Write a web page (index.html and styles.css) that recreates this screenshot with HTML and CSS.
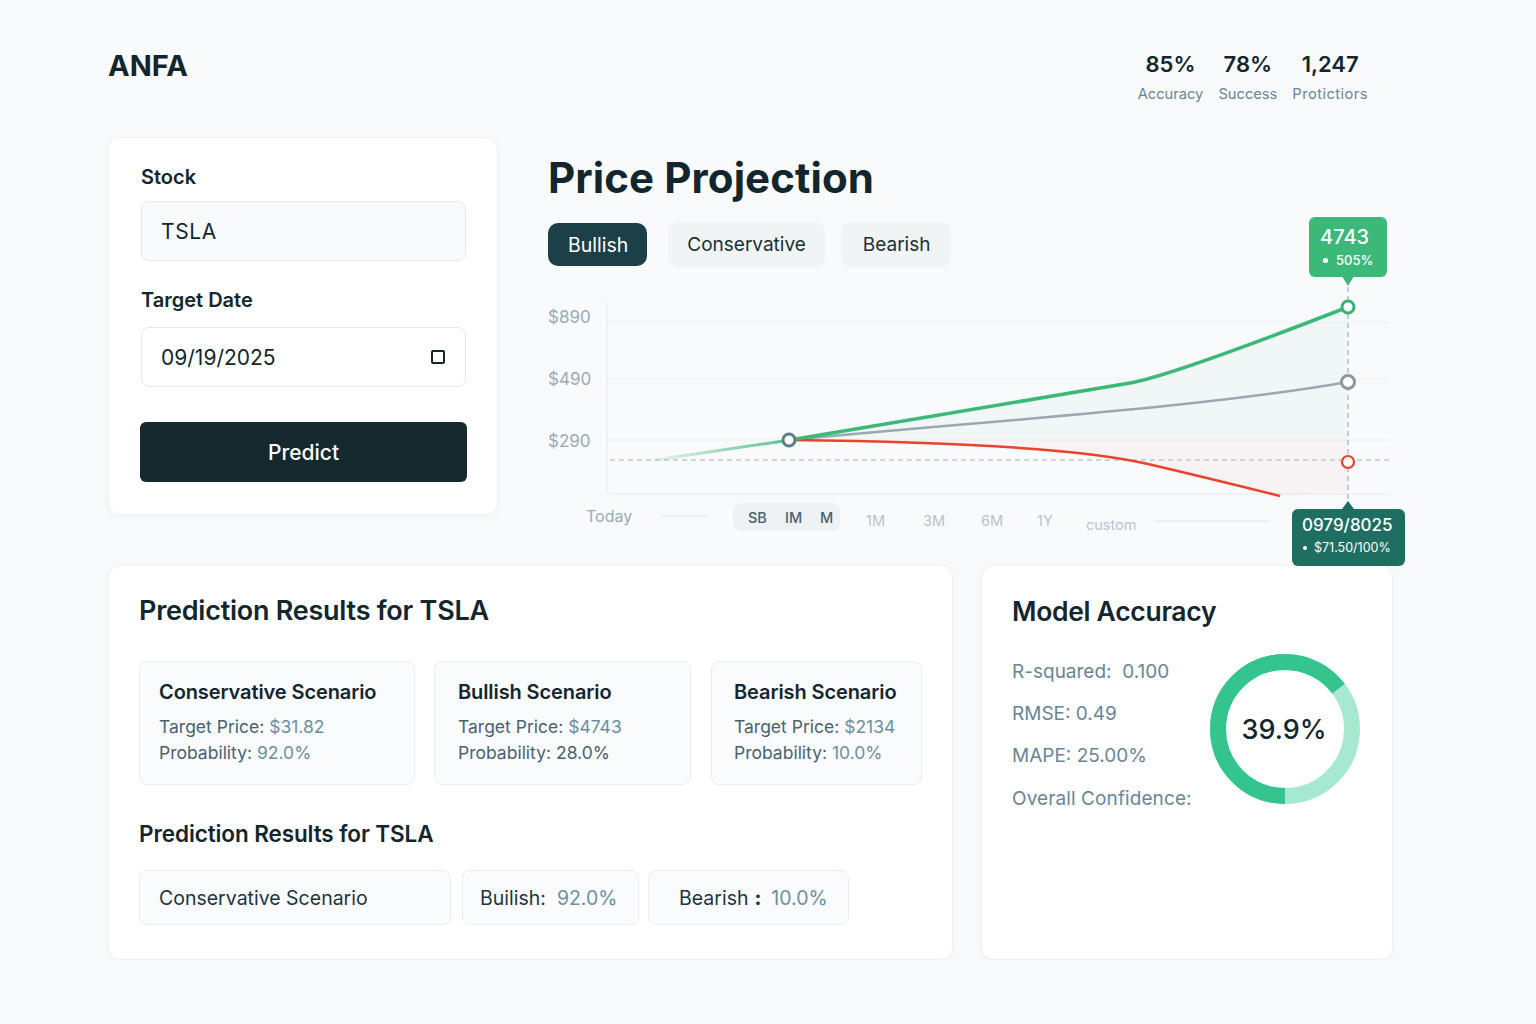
FILE: index.html
```html
<!DOCTYPE html>
<html lang="en">
<head>
<meta charset="utf-8">
<title>ANFA – Price Projection</title>
<link rel="stylesheet" href="styles.css">
</head>
<body>
<div class="page">
  <header class="topbar">
    <div class="brand">ANFA</div>
    <div class="stats">
      <div class="stat"><div class="stat-num">85%</div><div class="stat-label">Accuracy</div></div>
      <div class="stat"><div class="stat-num">78%</div><div class="stat-label">Success</div></div>
      <div class="stat"><div class="stat-num">1,247</div><div class="stat-label stat-label-wide">Protictiors</div></div>
    </div>
  </header>

  <section class="top-grid">
    <div class="card form-card">
      <div class="field-label">Stock</div>
      <div class="input input-muted">TSLA</div>
      <div class="field-label field-label-2">Target Date</div>
      <div class="input input-date"><span>09/19/2025</span><span class="cal-icon"></span></div>
      <button class="predict-btn">Predict</button>
    </div>

    <div class="chart-col">
      <h1 class="chart-title">Price Projection</h1>
      <div class="tabs">
        <div class="tab tab-active">Bullish</div>
        <div class="tab">Conservative</div>
        <div class="tab">Bearish</div>
      </div>
      <svg class="chart" width="860" height="260" viewBox="0 0 860 260">
        <defs>
          <linearGradient id="gstart" x1="107" y1="0" x2="242" y2="0" gradientUnits="userSpaceOnUse">
            <stop offset="0" stop-color="#3cb878" stop-opacity="0.1"/>
            <stop offset="1" stop-color="#3cb878" stop-opacity="0.85"/>
          </linearGradient>
        </defs>
        <line x1="59" y1="32" x2="842" y2="32" class="grid"/>
        <line x1="59" y1="89" x2="842" y2="89" class="grid"/>
        <line x1="59" y1="150" x2="842" y2="150" class="grid"/>
        <path d="M59 12 V198 Q59 204 65 204 H842" class="axis"/>
        <text x="0" y="33" class="ylab">$890</text>
        <text x="0" y="95" class="ylab">$490</text>
        <text x="0" y="157" class="ylab">$290</text>

        <path d="M242 150 L582 93 Q623 86 800 17 L800 150 Z" fill="#3cb878" opacity="0.035"/>
        <path d="M242 150 C420 152 540 160 600 174 S700 198 732 206 L800 204 L800 150 Z" fill="#f06a4a" opacity="0.05"/>

        <line x1="62" y1="170" x2="844" y2="170" class="dash"/>
        <line x1="800" y1="-3" x2="800" y2="220" class="dash"/>

        <path d="M107 170 L242 150" stroke="url(#gstart)" stroke-width="3" fill="none"/>
        <path d="M242 150 C450 130 650 118 800 92" class="line-gray"/>
        <path d="M242 150 C420 152 540 160 600 174 S700 198 732 206" class="line-red"/>
        <path d="M242 150 L582 93 Q623 86 800 17" class="line-green"/>

        <circle cx="241" cy="150" r="6" class="dot dot-start"/>
        <circle cx="800" cy="17" r="6" class="dot dot-green"/>
        <circle cx="800" cy="92" r="6.5" class="dot dot-gray"/>
        <circle cx="800" cy="172" r="6" class="dot dot-red"/>

        <text x="38" y="232" class="xlab">Today</text>
        <line x1="114" y1="226" x2="159" y2="226" class="xline"/>
        <rect x="185" y="213" width="107" height="28" rx="8" fill="#eef2f5"/>
        <text x="200" y="233" class="xpill">SB</text>
        <text x="237" y="233" class="xpill">IM</text>
        <text x="272" y="233" class="xpill">M</text>
        <text x="318" y="236" class="xfaint">1M</text>
        <text x="375" y="236" class="xfaint">3M</text>
        <text x="433" y="236" class="xfaint">6M</text>
        <text x="489" y="236" class="xfaint">1Y</text>
        <text x="538" y="240" class="xfaint">custom</text>
        <line x1="607" y1="231" x2="722" y2="231" class="xline"/>
      </svg>

      <div class="tip tip-top">
        <div class="tip-main">4743</div>
        <div class="tip-sub"><span class="tip-dot"></span>505%</div>
      </div>
      <div class="tip tip-bottom">
        <div class="tip-main tip-main-sm">0979/8025</div>
        <div class="tip-sub tip-sub-sm"><span class="tip-dot tip-dot-sm"></span>$71.50/100%</div>
      </div>
    </div>
  </section>

  <section class="bottom-grid">
    <div class="card results-card">
      <h2 class="card-title">Prediction Results for TSLA</h2>
      <div class="scenario-row">
        <div class="scenario scenario-1">
          <div class="scenario-title">Conservative Scenario</div>
          <div class="scenario-line">Target Price: <span class="val">$31.82</span></div>
          <div class="scenario-line">Probability: <span class="val">92.0%</span></div>
        </div>
        <div class="scenario scenario-2">
          <div class="scenario-title">Bullish Scenario</div>
          <div class="scenario-line">Target Price: <span class="val">$4743</span></div>
          <div class="scenario-line">Probability: 28.0%</div>
        </div>
        <div class="scenario scenario-3">
          <div class="scenario-title">Bearish Scenario</div>
          <div class="scenario-line">Target Price: <span class="val">$2134</span></div>
          <div class="scenario-line">Probability: <span class="val">10.0%</span></div>
        </div>
      </div>
      <h3 class="sub-title">Prediction Results for TSLA</h3>
      <div class="chip-row">
        <div class="chip chip-1">Conservative Scenario</div>
        <div class="chip chip-2">Builish:&nbsp;&nbsp;<span class="val">92.0%</span></div>
        <div class="chip chip-3">Bearish<b class="colon">:</b><span class="val">10.0%</span></div>
      </div>
    </div>

    <div class="card accuracy-card">
      <h2 class="card-title card-title-acc">Model Accuracy</h2>
      <div class="acc-body">
        <div class="acc-stats">
          <div class="acc-line">R-squared:&nbsp; 0.100</div>
          <div class="acc-line">RMSE: 0.49</div>
          <div class="acc-line">MAPE: 25.00%</div>
          <div class="acc-line">Overall Confidence:</div>
        </div>
        <div class="donut">
          <svg width="152" height="152" viewBox="0 0 152 152">
            <circle cx="76" cy="76" r="67" fill="none" stroke="#a7e8d1" stroke-width="16"/>
            <circle cx="76" cy="76" r="67" fill="none" stroke="#34c48e" stroke-width="16"
                    stroke-dasharray="272 500" transform="rotate(90 76 76)"/>
          </svg>
          <div class="donut-label">39.9%</div>
        </div>
      </div>
    </div>
  </section>
</div>
</body>
</html>
```

FILE: styles.css
```css
* { box-sizing: border-box; }
html, body { margin: 0; padding: 0; }
body {
  background: #f8fafc;
  font-family: "Inter", "Noto Sans", "Liberation Sans", sans-serif;
  color: #13262e;
}
.page {
  width: 1285px;
  margin-left: 108px;
}

/* header */
.topbar {
  height: 137px;
  padding-top: 48px;
  display: flex;
  justify-content: space-between;
  align-items: flex-start;
}
.brand {
  font-size: 29px;
  line-height: 36px;
  font-weight: 700;
  color: #13262e;
}
.stats {
  display: flex;
  gap: 15px;
  margin-right: 25px;
  margin-top: 2px;
}
.stat { text-align: center; }
.stat-num {
  font-size: 22px;
  line-height: 28px;
  font-weight: 600;
  color: #13262e;
}
.stat-label {
  margin-top: 8px;
  font-size: 14.7px;
  line-height: 16px;
  color: #6b8594;
}
.stat-label-wide { letter-spacing: 0.45px; }

/* cards */
.card {
  background: #fff;
  border: 1px solid #eef2f5;
  border-radius: 12px;
  box-shadow: 0 2px 8px rgba(30, 50, 70, 0.035);
}

.top-grid {
  display: grid;
  grid-template-columns: 390px minmax(0, 1fr);
  column-gap: 50px;
  align-items: start;
}

.form-card {
  padding: 27px 31px 32px 32px;
}
.field-label {
  font-size: 20px;
  line-height: 24px;
  font-weight: 600;
  color: #13262e;
}
.field-label-2 { margin-top: 27px; }
.input {
  margin-top: 12px;
  height: 60px;
  border: 1.5px solid #e4e9ee;
  border-radius: 8px;
  padding: 0 19px;
  display: flex;
  align-items: center;
  font-size: 21px;
  color: #13262e;
}
.input-muted { background: #f8fafc; letter-spacing: 0.6px; }
.input-date {
  margin-top: 15px;
  background: #fff;
  justify-content: space-between;
}
.cal-icon {
  width: 14px;
  height: 14px;
  border: 2px solid #13262e;
  border-radius: 2px;
  margin-right: 1px;
}
.predict-btn {
  margin-top: 35px;
  height: 60px;
  border: none;
  border-radius: 6px;
  background: #16292f;
  color: #fff;
  font-family: inherit;
  font-size: 21px;
  font-weight: 500;
  margin-left: -1px;
  width: calc(100% + 2px);
}

/* chart column */
.chart-col { position: relative; }
.chart-title {
  margin: 15px 0 0;
  font-size: 42px;
  line-height: 52px;
  font-weight: 700;
  letter-spacing: 0.1px;
  color: #13262e;
}
.tabs {
  margin-top: 18px;
  height: 45px;
  display: flex;
  align-items: center;
}
.tab {
  height: 45px;
  padding: 0 19px;
  display: flex;
  align-items: center;
  border-radius: 10px;
  background: #f0f4f4;
  font-size: 19px;
  color: #1c2f36;
  margin-right: 16px;
}
.tab:last-child { padding: 0 21px 0 22px; }
.tab-active {
  height: 43px;
  padding: 0 19px 0 20px;
  background: #1b4047;
  color: #fff;
  margin-right: 21px;
  font-size: 19.5px;
}
.chart {
  display: block;
  margin-top: 23px;
  overflow: visible;
}
.chart .grid { stroke: #eef2f4; stroke-width: 1; }
.chart .axis { fill: none; stroke: #e6ecf0; stroke-width: 1.2; }
.chart .ylab { font-family: "Inter", sans-serif; font-size: 17px; fill: #9aabb8; }
.chart .dash { stroke: #9fb0bb; stroke-width: 1.2; stroke-dasharray: 5 4; }
.chart .line-gray { fill: none; stroke: #9ba7b1; stroke-width: 2.5; }
.chart .line-red { fill: none; stroke: #e8432b; stroke-width: 2.5; }
.chart .line-green { fill: none; stroke: #3cb878; stroke-width: 3.5; }
.chart .dot { fill: #fff; stroke-width: 3; }
.chart .dot-start { stroke: #5e7f80; }
.chart .dot-green { stroke: #36b374; }
.chart .dot-gray { stroke: #8b98a2; }
.chart .dot-red { stroke: #e8432b; stroke-width: 2.2; }
.chart .xlab { font-family: "Inter", sans-serif; font-size: 16px; fill: #9aabb8; }
.chart .xline { stroke: #dfe6ea; stroke-width: 1.2; }
.chart .xpill { font-family: "Inter", sans-serif; font-size: 14.5px; font-weight: 500; fill: #4d6170; }
.chart .xfaint { font-family: "Inter", sans-serif; font-size: 14.5px; fill: #b7c4cd; }

/* tooltips */
.tip {
  position: absolute;
  color: #fff;
  border-radius: 6px;
}
.tip-top {
  left: 761px;
  top: 80px;
  width: 78px;
  height: 60px;
  background: #3cb878;
  padding: 8px 0 0 11px;
}
.tip-top::after {
  content: "";
  position: absolute;
  left: 33px;
  bottom: -9px;
  border-left: 6px solid transparent;
  border-right: 6px solid transparent;
  border-top: 10px solid #3cb878;
}
.tip-main {
  font-size: 20px;
  line-height: 24px;
  font-weight: 500;
}
.tip-sub {
  margin-top: 2px;
  font-size: 13px;
  line-height: 18px;
  font-weight: 500;
  display: flex;
  align-items: center;
}
.tip-dot {
  width: 5px;
  height: 5px;
  border-radius: 50%;
  background: #fff;
  margin: 0 8px 0 3px;
}
.tip-bottom {
  left: 744px;
  top: 372px;
  width: 113px;
  height: 57px;
  background: #1f6e62;
  padding: 5px 0 0 10px;
}
.tip-bottom::before {
  content: "";
  position: absolute;
  left: 50px;
  top: -8px;
  border-left: 6px solid transparent;
  border-right: 6px solid transparent;
  border-bottom: 8px solid #1f6e62;
}
.tip-main-sm { font-size: 17px; line-height: 22px; }
.tip-sub-sm { font-size: 12.5px; margin-top: 3px; font-weight: 400; }
.tip-dot-sm { width: 4px; height: 4px; margin: 0 7px 0 1px; }

/* bottom grid */
.bottom-grid {
  margin-top: 15px;
  display: grid;
  grid-template-columns: 845px 412px;
  column-gap: 28px;
}
.results-card {
  padding: 29px 30px 34px 30px;
}
.card-title {
  margin: 0;
  font-size: 27px;
  line-height: 32px;
  font-weight: 600;
  letter-spacing: -0.25px;
  color: #13262e;
}
.card-title-acc { font-size: 26.5px; letter-spacing: -0.3px; }
.scenario-row {
  margin-top: 34px;
  display: flex;
}
.scenario {
  height: 124px;
  background: #f9fbfc;
  border: 1px solid #e9eef1;
  border-radius: 8px;
  padding: 18px 19px;
}
.scenario-1 { width: 276px; margin-right: 19px; }
.scenario-2 { width: 257px; margin-right: 20px; padding-left: 23px; }
.scenario-3 { width: 211px; padding-left: 22px; }
.scenario-title {
  font-size: 20px;
  line-height: 24px;
  font-weight: 600;
  letter-spacing: -0.1px;
  color: #13262e;
}
.scenario-line {
  font-size: 17.5px;
  line-height: 26px;
  color: #4a6270;
}
.scenario-title + .scenario-line { margin-top: 10px; }
.val { color: #6e8fa0; }
.sub-title {
  margin: 35px 0 0;
  font-size: 22.5px;
  line-height: 28px;
  font-weight: 600;
  letter-spacing: -0.1px;
  color: #13262e;
}
.chip-row {
  margin-top: 22px;
  display: flex;
}
.chip {
  height: 55px;
  display: flex;
  align-items: center;
  background: #f9fbfc;
  border: 1px solid #e9eef1;
  border-radius: 8px;
  font-size: 19.5px;
  color: #1f343c;
  padding-left: 19px;
}
.chip-1 { width: 312px; margin-right: 11px; }
.chip-2 { width: 177px; margin-right: 9px; padding-left: 17px; }
.chip-3 { width: 201px; padding-left: 30px; }
.colon { font-weight: 800; margin: 0 10px 0 6px; }

.accuracy-card {
  padding: 29px 31px 34px 30px;
}
.acc-body {
  margin-top: 24px;
  display: flex;
  justify-content: space-between;
  align-items: flex-start;
}
.acc-line {
  font-size: 19px;
  line-height: 42px;
  color: #6b8594;
}
.acc-line:last-child { margin-top: 1px; letter-spacing: 0.1px; }
.donut {
  position: relative;
  width: 152px;
  height: 152px;
  margin-top: 2px;
}
.donut svg { display: block; }
.donut-label {
  position: absolute;
  inset: 0;
  display: flex;
  align-items: center;
  justify-content: center;
  font-size: 27px;
  font-weight: 500;
  color: #13262e;
  padding-right: 2px;
}
```
